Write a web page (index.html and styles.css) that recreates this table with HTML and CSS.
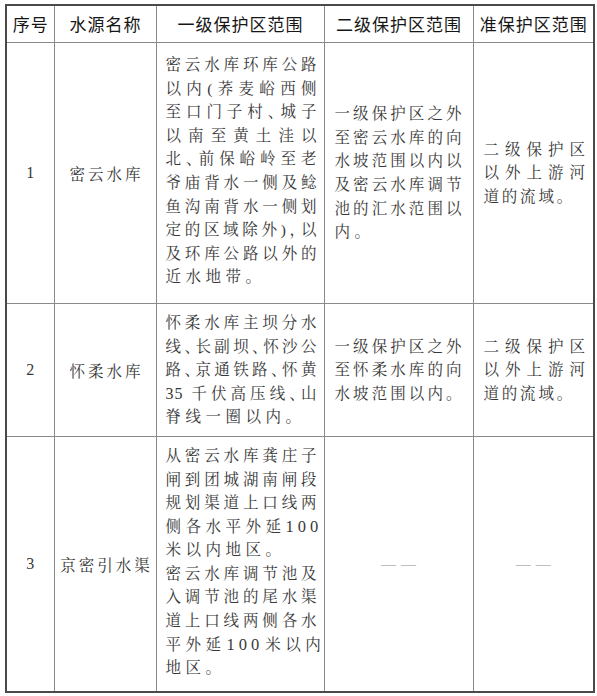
FILE: index.html
```html
<!DOCTYPE html>
<html lang="zh-CN">
<head>
<meta charset="utf-8">
<title>水源保护区范围</title>
<link rel="stylesheet" href="styles.css">
</head>
<body>
<div class="page">
<table class="tbl">
  <colgroup>
    <col class="c1"><col class="c2"><col class="c3"><col class="c4"><col class="c5">
  </colgroup>
  <thead>
    <tr class="head">
      <th>序号</th>
      <th>水源名称</th>
      <th>一级保护区范围</th>
      <th>二级保护区范围</th>
      <th>准保护区范围</th>
    </tr>
  </thead>
  <tbody>
    <tr>
      <td class="num">1</td>
      <td class="name">密云水库</td>
      <td class="one r1">
        <div class="j">密云水库环库公路</div>
        <div class="j">以内(荞麦峪西侧</div>
        <div class="j">至口门子村<span class="h">、</span>城子</div>
        <div class="j">以南至黄土洼以</div>
        <div class="j">北<span class="h">、</span>前保峪岭至老</div>
        <div class="j">爷庙背水一侧及鲶</div>
        <div class="j">鱼沟南背水一侧划</div>
        <div class="j">定的区域除外)<span class="h">，</span>以</div>
        <div class="j">及环库公路以外的</div>
        <div class="n">近水地带。</div>
      </td>
      <td class="two">
        <div class="j">一级保护区之外</div>
        <div class="j">至密云水库的向</div>
        <div class="j">水坡范围以内以</div>
        <div class="j">及密云水库调节</div>
        <div class="j">池的汇水范围以</div>
        <div class="n">内。</div>
      </td>
      <td class="three">
        <div class="j">二级保护区</div>
        <div class="j">以外上游河</div>
        <div class="n">道的流域。</div>
      </td>
    </tr>
    <tr>
      <td class="num">2</td>
      <td class="name">怀柔水库</td>
      <td class="one r2">
        <div class="j">怀柔水库主坝分水</div>
        <div class="j">线<span class="h">、</span>长副坝<span class="h">、</span>怀沙公</div>
        <div class="j">路<span class="h">、</span>京通铁路<span class="h">、</span>怀黄</div>
        <div class="j"><span class="d35">35</span>千伏高压线<span class="h">、</span>山</div>
        <div class="n">脊线一圈以内。</div>
      </td>
      <td class="two">
        <div class="j">一级保护区之外</div>
        <div class="j">至怀柔水库的向</div>
        <div class="j">水坡范围以内。</div>
      </td>
      <td class="three">
        <div class="j">二级保护区</div>
        <div class="j">以外上游河</div>
        <div class="n">道的流域。</div>
      </td>
    </tr>
    <tr>
      <td class="num">3</td>
      <td class="name">京密引水渠</td>
      <td class="one r3">
        <div class="j">从密云水库龚庄子</div>
        <div class="j">闸到团城湖南闸段</div>
        <div class="j">规划渠道上口线两</div>
        <div class="n">侧各水平外延<span class="lat la">100</span></div>
        <div class="n">米以内地区。</div>
        <div class="j">密云水库调节池及</div>
        <div class="j">入调节池的尾水渠</div>
        <div class="j">道上口线两侧各水</div>
        <div class="n">平外延<span class="lat lb">100</span>米以内</div>
        <div class="n">地区。</div>
      </td>
      <td class="two none"><span class="dash">——</span></td>
      <td class="three none"><span class="dash">——</span></td>
    </tr>
  </tbody>
</table>
</div>
</body>
</html>
```
FILE: styles.css
```css
html, body {
  margin: 0;
  padding: 0;
  background: #ffffff;
}

.page {
  padding: 4px 0 0 5px;
}

.tbl {
  border-collapse: collapse;
  table-layout: fixed;
  width: 588px;
  border: 2px solid #4a4a4a;
  font-family: "Liberation Serif", "Noto Serif CJK SC", "Noto Sans CJK SC", serif;
  color: #383838;
}

.c1 { width: 48px; }
.c2 { width: 102px; }
.c3 { width: 168px; }
.c4 { width: 149px; }
.c5 { width: 121px; }

.tbl th,
.tbl td {
  border: 1px solid #8a8a8a;
  padding: 0;
}

.head th {
  height: 36px;
  font-family: "Noto Sans CJK SC", "Liberation Sans", sans-serif;
  font-weight: 400;
  font-size: 17px;
  letter-spacing: 1px;
  padding-left: 1px;
  color: #161616;
  text-align: center;
  vertical-align: middle;
  line-height: 20px;
}

.tbl tr:first-child th {
  border-top: 2px solid #4a4a4a;
}

.num {
  text-align: center;
  vertical-align: middle;
  font-size: 16px;
}

.name {
  text-align: center;
  vertical-align: middle;
  font-size: 15.5px;
  letter-spacing: 3px;
  padding-left: 3px !important;
}

.one,
.two,
.three {
  font-size: 15.5px;
  line-height: 23.6px;
  vertical-align: middle;
}

.one {
  vertical-align: top;
  padding: 0 7px 0 9px !important;
}

.r1 { padding-top: 10px !important; padding-bottom: 14px !important; }
.r2 { padding-top: 7px !important; padding-bottom: 7px !important; }
.r3 { padding-top: 7px !important; padding-bottom: 11px !important; }

.two {
  padding: 0 11px 0 10px !important;
}

.three {
  padding: 0 8px 0 10px !important;
}

.j {
  text-align: justify;
  text-align-last: justify;
}

.n {
  text-align: left;
  letter-spacing: 4.5px;
  white-space: nowrap;
}

.three .n {
  letter-spacing: 2.8px;
}

.h {
  font-feature-settings: "halt";
}

.d35 {
  font-size: 16px;
  letter-spacing: 1px;
  margin-right: 4px;
}

.lat {
  font-size: 16.5px;
  letter-spacing: 4px;
}

.la { margin-left: 0; }
.lb { margin-left: 1px; margin-right: 2px; }

.none {
  text-align: center;
  padding: 0 !important;
}

.dash {
  font-family: "Liberation Serif", serif;
  font-size: 15px;
  letter-spacing: 5px;
  padding-left: 5px;
  color: #8a8a8a;
}
```
